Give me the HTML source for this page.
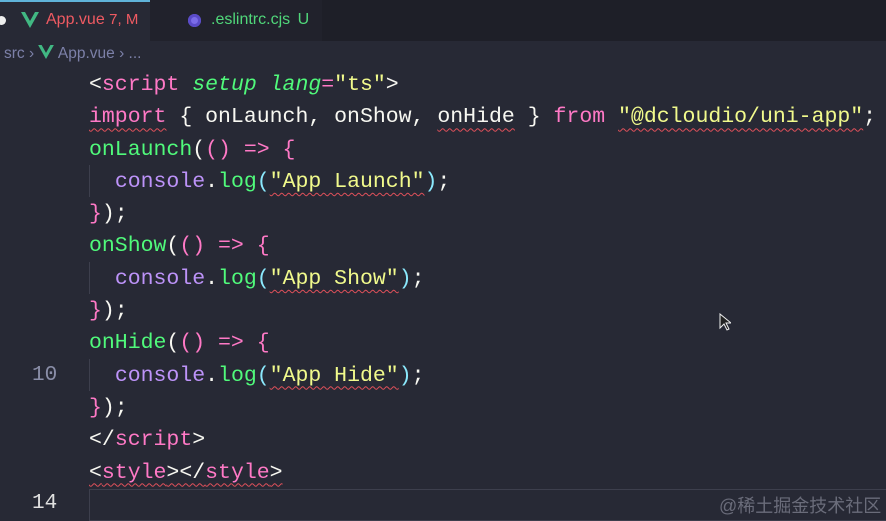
<!DOCTYPE html>
<html><head><meta charset="utf-8"><style>
body{margin:0;width:886px;height:521px;background:#272935;overflow:hidden;position:relative;font-family:"Liberation Sans",sans-serif}
.tabs{position:absolute;left:0;top:0;width:886px;height:41px;background:#1e1f28}
.tab1{position:absolute;left:0;top:0;width:150px;height:41px;background:#272935;border-top:2px solid #5fb3d9;box-sizing:border-box}
.tab2{position:absolute;left:150px;top:0;width:172px;height:41px;background:#21222c}
.t{position:absolute;top:11px;font-size:16px;white-space:nowrap}
.bc{position:absolute;top:45px;left:4px;font-size:15.5px;color:#7c80a8;white-space:nowrap}
.code{position:absolute;left:89px;top:69px;font-family:"Liberation Mono",monospace;font-size:21.5px;color:#f8f8f2}
.l{height:32.3px;line-height:32.3px;white-space:pre}
.p{color:#ff79c6}.g{color:#50fa7b}.gi{color:#50fa7b;font-style:italic}.y{color:#f1fa8c}.v{color:#bd93f9}.c{color:#8be9fd}.w{color:#f8f8f2}
.sq{text-decoration:underline wavy #e0505a;text-decoration-thickness:1px;text-underline-offset:5px}
.ln{position:absolute;left:32px;font-family:"Liberation Mono",monospace;font-size:21px;color:#8a8ea8}
.cur{position:absolute;left:89px;top:489px;width:797px;height:32px;border:1.5px solid #3d3f4d;border-right:none;box-sizing:border-box}
.guide{position:absolute;left:89px;width:1px;height:32px;background:#3d3f4d}
</style></head><body>
<div class="tabs"></div>
<div class="tab1"></div><div class="tab2"></div>
<div style="position:absolute;left:-3px;top:16px;width:9px;height:9px;border-radius:50%;background:#eee"></div>
<svg style="position:absolute;left:21px;top:12px" width="18" height="16" viewBox="0 0 18 16"><path d="M0 0h4l5 9 5-9h4L9 16z" fill="#41b883"/></svg>
<div class="t" style="left:46px;color:#ef5a62">App.vue <span style="font-size:15px">7, M</span></div>
<div style="position:absolute;left:188px;top:14px;width:13px;height:13px;border-radius:50%;background:#7b6ce8;box-shadow:inset 0 0 0 3px #5a4bc8"></div>
<div class="t" style="left:211px;color:#50d77a">.eslintrc.cjs <span style="margin-left:3px">U</span></div>
<div class="bc">src <span>›</span> <svg width="16" height="14" viewBox="0 0 18 16" style="vertical-align:-1px"><path d="M0 0h4l5 9 5-9h4L9 16z" fill="#41b883"/></svg> App.vue › ...</div>
<div class="guide" style="top:165px"></div><div class="guide" style="top:262px"></div><div class="guide" style="top:359px"></div>
<div class="cur"></div>
<div class="ln" style="top:364px">10</div>
<div class="ln" style="top:492px;color:#e0e0e0">14</div>
<div class="code">
<div class="l">&lt;<span class="p">script</span> <span class="gi">setup</span> <span class="gi">lang</span><span class="p">=</span><span class="y">"ts"</span>&gt;</div>
<div class="l"><span class="p sq">import</span> { onLaunch, onShow, <span class="sq">onHide</span> } <span class="p">from</span> <span class="y sq">"@dcloudio/uni-app"</span>;</div>
<div class="l"><span class="g">onLaunch</span>(<span class="p">() =&gt; {</span></div>
<div class="l">  <span class="v">console</span>.<span class="g">log</span><span class="c">(</span><span class="y sq">"App Launch"</span><span class="c">)</span>;</div>
<div class="l"><span class="p">}</span>);</div>
<div class="l"><span class="g">onShow</span>(<span class="p">() =&gt; {</span></div>
<div class="l">  <span class="v">console</span>.<span class="g">log</span><span class="c">(</span><span class="y sq">"App Show"</span><span class="c">)</span>;</div>
<div class="l"><span class="p">}</span>);</div>
<div class="l"><span class="g">onHide</span>(<span class="p">() =&gt; {</span></div>
<div class="l">  <span class="v">console</span>.<span class="g">log</span><span class="c">(</span><span class="y sq">"App Hide"</span><span class="c">)</span>;</div>
<div class="l"><span class="p">}</span>);</div>
<div class="l">&lt;/<span class="p">script</span>&gt;</div>
<div class="l"><span class="sq">&lt;<span class="p">style</span>&gt;&lt;/<span class="p">style</span>&gt;</span></div>
</div>
<svg style="position:absolute;left:719px;top:313px" width="12" height="18" viewBox="0 0 12 18"><path d="M1 1v14l4-4 3 6 2-1-3-6h5z" fill="#222" stroke="#eee" stroke-width="1"/></svg>
<div style="position:absolute;left:719px;top:492px;font-size:18px;color:#6a6c7a;font-family:'Liberation Sans','Noto Sans CJK SC',sans-serif">@稀土掘金技术社区</div>
</body></html>
